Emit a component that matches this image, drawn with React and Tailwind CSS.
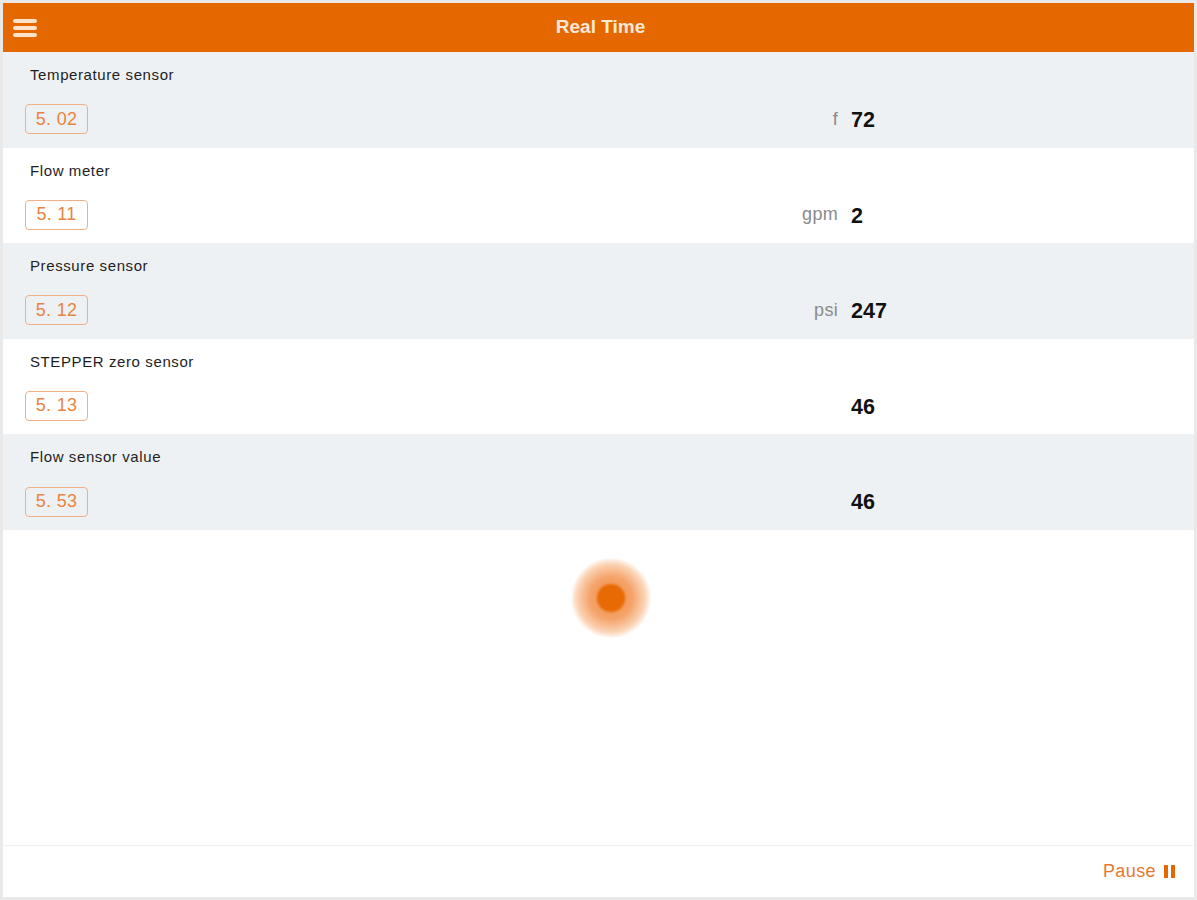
import React from "react";

const SENSORS = [
  { name: "Temperature sensor", code: "5. 02", unit: "f", value: "72" },
  { name: "Flow meter", code: "5. 11", unit: "gpm", value: "2" },
  { name: "Pressure sensor", code: "5. 12", unit: "psi", value: "247" },
  { name: "STEPPER zero sensor", code: "5. 13", unit: "", value: "46" },
  { name: "Flow sensor value", code: "5. 53", unit: "", value: "46" },
];

export default function App() {
  return (
    <div
      className="w-[1197px] h-[900px] bg-[#e9e9e9] pt-[3px] px-[3px] pb-[3px] flex flex-col"
      style={{ fontFamily: '"Liberation Sans", Arial, sans-serif' }}
    >
      <div className="flex-1 flex flex-col bg-white">
        {/* Header */}
        <div className="h-[49px] shrink-0 bg-[#e56700] flex items-center relative">
          <div className="absolute left-[10px] top-[16px] flex flex-col gap-[3px]">
            <span className="block w-[24px] h-[4px] rounded-sm bg-[#fde2cc]" />
            <span className="block w-[24px] h-[4px] rounded-sm bg-[#fde2cc]" />
            <span className="block w-[24px] h-[4px] rounded-sm bg-[#fde2cc]" />
          </div>
          <h1 className="flex-1 text-center text-[19px] font-bold text-[#fde9da] pl-[4px]">
            Real Time
          </h1>
        </div>

        {/* Sensor rows */}
        <div className="flex flex-col">
          {SENSORS.map((s, idx) => (
            <div
              key={s.code}
              className={`h-[95.6px] flex flex-col pl-[22px] pt-[13px] ${
                idx % 2 === 0 ? "bg-[#eef1f4]" : "bg-white"
              }`}
            >
              <p className="text-[15px] leading-[20px] tracking-[0.6px] text-[#1e1e1e] pl-[5px]">
                {s.name}
              </p>
              <div className="flex items-center mt-[17px]">
                <span className="w-[63px] h-[30px] flex items-center justify-center border border-[#efb088] rounded-[4px] text-[18px] tracking-[0.3px] text-[#e8843f]">
                  {s.code}
                </span>
                <span className="ml-auto w-[100px] text-right text-[18px] tracking-[0.3px] text-[#8a8a8a]">
                  {s.unit}
                </span>
                <span className="w-[356px] pl-[13px] pt-[2px] text-[21.5px] font-bold text-[#111]">
                  {s.value}
                </span>
              </div>
            </div>
          ))}
        </div>

        {/* Loading indicator */}
        <div className="flex-1 flex justify-center pt-[28px] pl-[25px]">
          <div className="w-[80px] h-[80px] rounded-full flex items-center justify-center bg-[radial-gradient(circle,#f08a3e_0%,#f5a46c_38%,#fbd3b5_60%,rgba(255,255,255,0)_72%)]">
            <div className="w-[28px] h-[28px] rounded-full bg-[#e86a05] blur-[1px]" />
          </div>
        </div>

        {/* Footer */}
        <div className="h-[52px] shrink-0 border-t border-[#f1f1f1] flex items-center justify-end pr-[19px]">
          <span className="text-[18px] tracking-[0.4px] text-[#e8782f]">Pause</span>
          <span className="flex gap-[3px] ml-[8px]">
            <span className="block w-[4px] h-[13px] bg-[#e56700]" />
            <span className="block w-[4px] h-[13px] bg-[#e56700]" />
          </span>
        </div>
      </div>
    </div>
  );
}
